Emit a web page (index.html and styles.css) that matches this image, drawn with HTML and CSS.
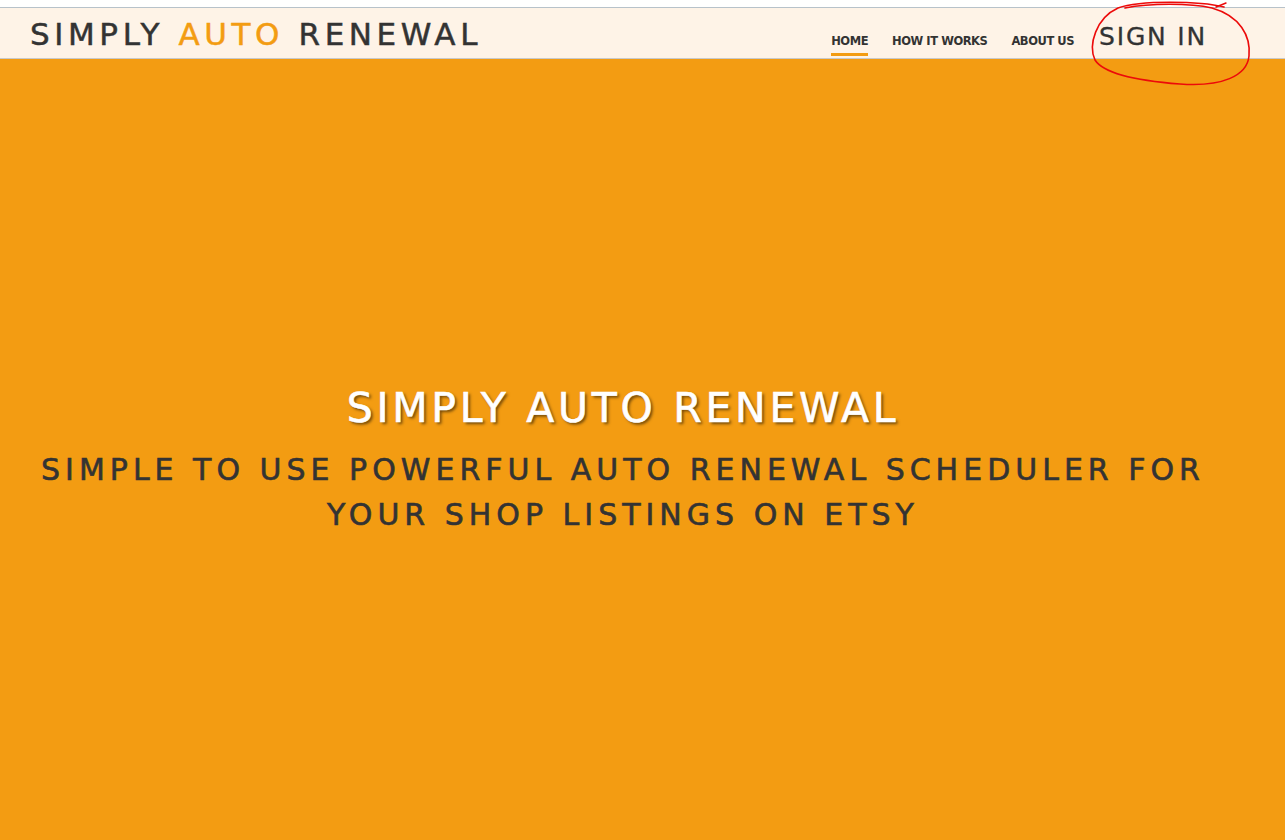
FILE: index.html
```html
<!DOCTYPE html>
<html lang="en">
<head>
<meta charset="utf-8">
<title>Simply Auto Renewal</title>
<link rel="stylesheet" href="styles.css">
</head>
<body>
<div class="topgap"></div>
<header class="navbar">
  <div class="brand">SIMPLY <span class="brand-accent">AUTO</span> RENEWAL</div>
  <nav class="nav">
    <a class="nav-link active" href="#">HOME</a>
    <a class="nav-link" href="#">HOW IT WORKS</a>
    <a class="nav-link" href="#">ABOUT US</a>
    <a class="signin" href="#">SIGN IN</a>
  </nav>
  <svg class="annotation" width="180" height="95" viewBox="1080 0 180 95" aria-hidden="true">
    <path d="M1224,7 C1200,1 1140,0 1118,8 C1096,18 1088,45 1095,60 C1104,74 1140,81 1180,84 C1222,87 1247,76 1249,56 C1251,36 1240,16 1212,8 C1190,3 1150,3 1125,8" fill="none" stroke="#ec0a0a" stroke-width="1.6" stroke-linecap="round"/>
    <path d="M1216,7 L1226,3" fill="none" stroke="#ec0a0a" stroke-width="1.4" stroke-linecap="round"/>
  </svg>
</header>
<main class="hero">
  <h1 class="hero-title">SIMPLY AUTO RENEWAL</h1>
  <p class="hero-sub">SIMPLE TO USE POWERFUL AUTO RENEWAL SCHEDULER FOR<br>YOUR SHOP LISTINGS ON ETSY</p>
</main>
</body>
</html>
```
FILE: styles.css
```css
html, body {
  margin: 0;
  padding: 0;
}
body {
  font-family: "DejaVu Sans", "Liberation Sans", sans-serif;
  color: #333;
  background: #f39c12;
  overflow: hidden;
  height: 840px;
}
.topgap {
  height: 7px;
  background: #fff;
}
.navbar {
  position: relative;
  box-sizing: border-box;
  height: 52px;
  background: #fef3e7;
  border-top: 1px solid #b7c2ca;
  border-bottom: 1px solid #c9c9c9;
  display: flex;
  align-items: baseline;
  padding: 11px 0 0 30px;
}
.brand {
  font-size: 31px;
  line-height: 31px;
  letter-spacing: 4.6px;
  color: #333;
  -webkit-text-stroke: 0.5px #333;
}
.brand-accent {
  color: #f39c12;
  -webkit-text-stroke: 0.5px #f39c12;
}
.nav {
  margin-left: auto;
  display: flex;
  align-items: baseline;
  gap: 24px;
  padding-right: 78px;
}
.nav-link {
  font-weight: bold;
  font-size: 11.5px;
  line-height: 12px;
  letter-spacing: -0.45px;
  color: #333;
  text-decoration: none;
  padding-bottom: 6px;
  border-bottom: 3px solid transparent;
}
.nav-link.active {
  border-bottom-color: #f39c12;
}
.signin {
  margin-left: 1px;
  font-size: 25px;
  line-height: 25px;
  letter-spacing: 1.8px;
  color: #333;
  text-decoration: none;
  -webkit-text-stroke: 0.3px #333;
}
.annotation {
  position: absolute;
  left: 1080px;
  top: -8px;
  overflow: visible;
}
.hero {
  box-sizing: border-box;
  height: 781px;
  padding: 325px 39px 0 0;
  text-align: center;
}
.hero-title {
  margin: 0;
  font-size: 41px;
  line-height: 49px;
  font-weight: normal;
  letter-spacing: 3.7px;
  color: #fff;
  -webkit-text-stroke: 0.6px #fff;
  text-shadow: 2px 2px 3px rgba(0, 0, 0, 0.55);
}
.hero-sub {
  margin: 14px 0 0;
  font-size: 30px;
  line-height: 45px;
  letter-spacing: 5px;
  color: #333;
  -webkit-text-stroke: 0.6px #333;
}
```
